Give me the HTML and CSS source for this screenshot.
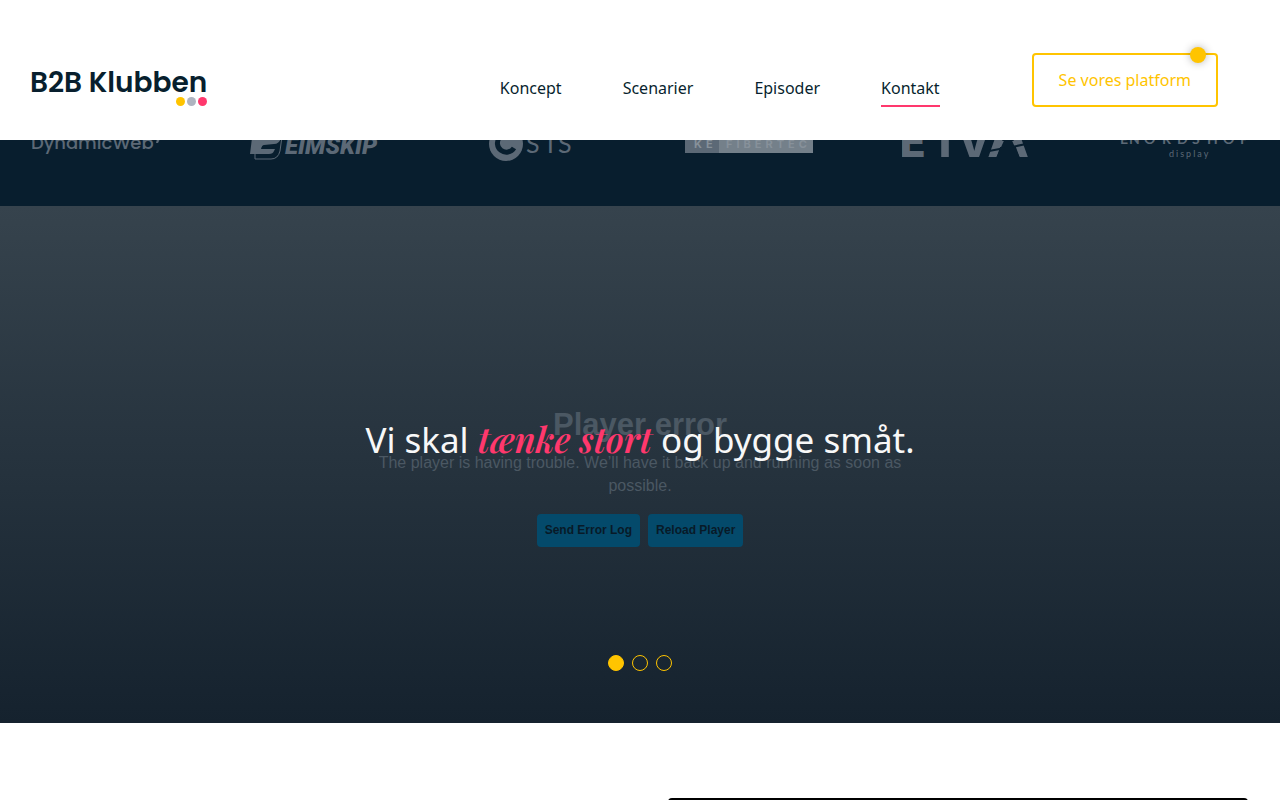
FILE: index.html
```html
<!DOCTYPE html>
<html lang="da">
<head>
<meta charset="utf-8">
<meta name="viewport" content="width=device-width, initial-scale=1">
<title>B2B Klubben</title>
<link rel="stylesheet" href="styles.css">
</head>
<body>
<header class="site-header">
  <a class="brand" href="#" aria-label="B2B Klubben">
    <span class="brand-name">B2B Klubben</span>
    <span class="brand-dots"><i class="dot-yellow"></i><i class="dot-grey"></i><i class="dot-pink"></i></span>
  </a>
  <nav class="site-nav">
    <a href="#koncept">Koncept</a>
    <a href="#scenarier">Scenarier</a>
    <a href="#episoder">Episoder</a>
    <a class="active" href="#kontakt">Kontakt</a>
  </nav>
  <a class="platform-link" href="#platform">Se vores platform</a>
</header>

<main>
  <section class="clients">
    <svg class="client" viewBox="0 0 128 52">
      <text class="t-dynamic" x="-1" y="39">DynamicWeb</text>
      <path d="M124 33l1-4h3l-2 4z"/>
    </svg>
    <svg class="client" viewBox="0 0 128 52">
      <path d="M2 28h9l-1 2h12q3 0 4-2h5q-2 6-7 6l-10 1q-2 0-3 4h14l-1 2q-1 3-5 3H0z"/>
      <path class="outline" d="M5 44v5h16q7 0 9-8l3-22"/>
      <text class="t-eimskip" x="35" y="44">EIMSKIP</text>
    </svg>
    <svg class="client" viewBox="0 0 128 52">
      <circle cx="39" cy="34" r="17"/>
      <path class="cut" d="M46 27a9 9 0 1 0 1 11"/>
      <text class="t-sts" x="59 76 91" y="43">STS</text>
    </svg>
    <svg class="client" viewBox="0 0 128 52">
      <path d="M0 20h34v23H0z"/>
      <path class="light" d="M34 20h94v23H34z"/>
      <text class="t-ke" x="9" y="38">KE</text>
      <text class="t-fibertec" x="41" y="38">FIBERTEC</text>
    </svg>
    <svg class="client" viewBox="0 0 128 52">
      <text class="t-eiva" y="47"><tspan class="wide" x="-4">E</tspan><tspan x="35 51 85">IVA</tspan></text>
      <path class="background" d="M106 22l12 26H94z"/>
      <path class="slice" d="M87 41l16-3M110 37l14-3"/>
    </svg>
    <svg class="client" viewBox="0 0 128 52">
      <text class="t-nord" x="0 9 24 42 57 72 87 103 120" y="34">ENORDSHOP</text>
      <text class="t-display" x="49" y="47">display</text>
    </svg>
  </section>

  <section class="hero">
    <div class="player">
      <h2>Player error</h2>
      <p>The player is having trouble. We’ll have it back up and running as soon as possible.</p>
      <div class="player-actions">
        <button type="button">Send Error Log</button>
        <button type="button">Reload Player</button>
      </div>
    </div>
    <div class="slide">
      <h1>Vi skal <em>tænke stort</em> og bygge småt.</h1>
    </div>
    <div class="pager">
      <button class="current" type="button" aria-label="Slide 1"></button>
      <button type="button" aria-label="Slide 2"></button>
      <button type="button" aria-label="Slide 3"></button>
    </div>
  </section>

  <section class="feature">
    <div></div>
    <div class="video"></div>
  </section>
</main>
</body>
</html>
```

FILE: styles.css
```css
* { box-sizing: border-box; }

body {
  margin: 0;
  background: #fff;
  color: #081f2e;
  font: 16px/24px "Noto Sans", sans-serif;
}

a { color: inherit; text-decoration: none; }

.site-header {
  position: fixed;
  inset: 0 0 auto;
  z-index: 10;
  display: flex;
  align-items: flex-end;
  padding: 53px 62px 33px 30px;
  background: #fff;
}

.brand {
  display: flex;
  flex-direction: column;
  align-items: flex-end;
  padding-bottom: 1px;
}

.brand-name {
  font: 600 28px/28px Poppins, Inter, sans-serif;
}

.brand-dots { display: flex; gap: 2px; }

.brand-dots i {
  width: 9px;
  height: 9px;
  border-radius: 50%;
}

.dot-yellow { background: #ffc400; }
.dot-grey { background: #afb4c0; }
.dot-pink { background: #ff386d; }

.site-nav {
  display: flex;
  gap: 61px;
  margin-left: auto;
}

.site-nav a {
  padding-bottom: 5px;
  border-bottom: 2px solid transparent;
}

.site-nav .active { border-color: #ff386d; }

.platform-link {
  position: relative;
  margin-left: 92px;
  padding: 13px 25px;
  border: 2px solid #ffc400;
  border-radius: 4px;
  color: #ffc400;
}

.platform-link::after {
  content: "";
  position: absolute;
  top: -8px;
  right: 10px;
  width: 16px;
  height: 16px;
  border-radius: 50%;
  background: #ffc400;
  box-shadow: 0 0 8px rgba(0, 0, 0, .3);
}

.clients {
  display: flex;
  justify-content: space-between;
  padding: 110px 32px 44px;
  background: #081e2e;
}

.client {
  width: 128px;
  height: 52px;
  fill: #5c6976;
}

.client .outline { fill: none; stroke: #5c6976; }
.client .cut { fill: none; stroke: #081e2e; stroke-width: 5; }
.client .slice { fill: none; stroke: #081e2e; stroke-width: 2; }
.client .background { fill: #081e2e; }
.client .light { fill: #74808a; }

.t-dynamic { font: 500 18px Poppins, Inter, sans-serif; }
.t-eimskip { font: italic 900 24px Roboto, sans-serif; }
.t-sts { font: 400 25px Lato, sans-serif; }
.t-ke, .t-fibertec { font: 700 11px Inter, sans-serif; letter-spacing: 4px; }
.t-ke { fill: #87919a; }
.t-fibertec { fill: #87919a; }
.t-eiva { font: 600 58px Inter, sans-serif; }
.t-eiva .wide { font: 700 42px "DejaVu Sans", sans-serif; }
.t-nord { font: 700 14px Lato, sans-serif; }
.t-display { font: 400 9px Lato, sans-serif; letter-spacing: 2px; }

.hero {
  position: relative;
  padding: 201px 32px 176px;
  background: linear-gradient(#36434d, #15222e);
}

.player {
  max-width: 540px;
  margin: 0 auto;
  color: #4b5863;
  font: 16px/23px "Liberation Sans", Arial, sans-serif;
  text-align: center;
}

.player h2 {
  margin: 0 0 8px;
  font-size: 31px;
  line-height: 36px;
}

.player p { margin: 0 0 17px; }

.player-actions {
  display: flex;
  justify-content: center;
  gap: 8px;
}

.player-actions button {
  padding: 0 8px;
  border: 0;
  border-radius: 4px;
  background: #044a6b;
  color: #081a28;
  font: 700 12px/33px "Liberation Sans", Arial, sans-serif;
}

.slide {
  position: absolute;
  inset: 205px 32px auto;
  text-align: center;
}

.slide h1 {
  margin: 0;
  color: #f8f8f8;
  font-size: 35px;
  font-weight: 400;
  line-height: 56px;
}

.slide em {
  color: #ff386d;
  font-family: "Playfair Display", "Liberation Serif", serif;
  font-weight: 600;
}

.pager {
  position: absolute;
  inset: auto 0 52px;
  display: flex;
  justify-content: center;
  gap: 8px;
}

.pager button {
  width: 16px;
  height: 16px;
  padding: 0;
  border: 1px solid #ffc400;
  border-radius: 50%;
  background: transparent;
}

.pager .current { background: #ffc400; }

.feature {
  display: grid;
  grid-template-columns: 1fr 1fr;
  gap: 56px;
  padding: 75px 32px;
}

.video {
  aspect-ratio: 16 / 9;
  border-radius: 4px;
  background: #000;
}
```
